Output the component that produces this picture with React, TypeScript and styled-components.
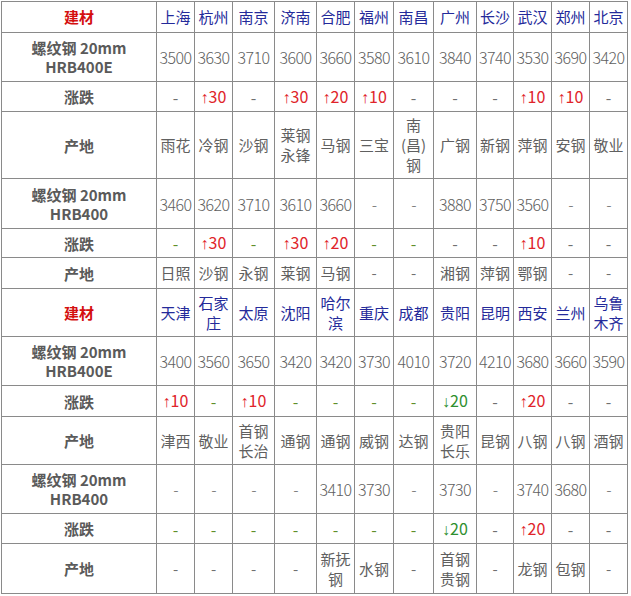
import React from "react";
import styled, { createGlobalStyle } from "styled-components";

type Tone = "plain" | "up" | "down" | "dash" | "greenDash";

interface Block {
  cities: string[];
  heights: number[];
  rows: { label: string[]; kind: "price" | "change" | "origin"; cells: string[]; green?: number[] }[];
}

const colWidths = [155, 38, 38, 42, 42, 38, 39, 40, 43, 37, 38, 38, 38];

const blocks: Block[] = [
  {
    cities: ["上海", "杭州", "南京", "济南", "合肥", "福州", "南昌", "广州", "长沙", "武汉", "郑州", "北京"],
    heights: [31, 49, 30, 67, 50, 29, 31],
    rows: [
      {
        label: ["螺纹钢 20mm", "HRB400E"],
        kind: "price",
        cells: ["3500", "3630", "3710", "3600", "3660", "3580", "3610", "3840", "3740", "3530", "3690", "3420"],
      },
      {
        label: ["涨跌"],
        kind: "change",
        cells: ["-", "↑30", "-", "↑30", "↑20", "↑10", "-", "-", "-", "↑10", "↑10", "-"],
      },
      {
        label: ["产地"],
        kind: "origin",
        cells: ["雨花", "冷钢", "沙钢", "莱钢永锋", "马钢", "三宝", "南(昌)钢", "广钢", "新钢", "萍钢", "安钢", "敬业"],
      },
      {
        label: ["螺纹钢 20mm", "HRB400"],
        kind: "price",
        cells: ["3460", "3620", "3710", "3610", "3660", "-", "-", "3880", "3750", "3560", "-", "-"],
      },
      {
        label: ["涨跌"],
        kind: "change",
        cells: ["-", "↑30", "-", "↑30", "↑20", "-", "-", "-", "-", "↑10", "-", "-"],
        green: [0, 2, 5, 6],
      },
      {
        label: ["产地"],
        kind: "origin",
        cells: ["日照", "沙钢", "永钢", "莱钢", "马钢", "-", "-", "湘钢", "萍钢", "鄂钢", "-", "-"],
      },
    ],
  },
  {
    cities: ["天津", "石家庄", "太原", "沈阳", "哈尔滨", "重庆", "成都", "贵阳", "昆明", "西安", "兰州", "乌鲁木齐"],
    heights: [48, 49, 31, 48, 49, 30, 50],
    rows: [
      {
        label: ["螺纹钢 20mm", "HRB400E"],
        kind: "price",
        cells: ["3400", "3560", "3650", "3420", "3420", "3730", "4010", "3720", "4210", "3680", "3660", "3590"],
      },
      {
        label: ["涨跌"],
        kind: "change",
        cells: ["↑10", "-", "↑10", "-", "-", "-", "-", "↓20", "-", "↑20", "-", "-"],
        green: [1, 3, 4, 5, 6],
      },
      {
        label: ["产地"],
        kind: "origin",
        cells: ["津西", "敬业", "首钢长治", "通钢", "通钢", "威钢", "达钢", "贵阳长乐", "昆钢", "八钢", "八钢", "酒钢"],
      },
      {
        label: ["螺纹钢 20mm", "HRB400"],
        kind: "price",
        cells: ["-", "-", "-", "-", "3410", "3730", "-", "3730", "-", "3740", "3680", "-"],
      },
      {
        label: ["涨跌"],
        kind: "change",
        cells: ["-", "-", "-", "-", "-", "-", "-", "↓20", "-", "↑20", "-", "-"],
        green: [0, 1, 2, 3, 4, 5, 6],
      },
      {
        label: ["产地"],
        kind: "origin",
        cells: ["-", "-", "-", "-", "新抚钢", "水钢", "-", "首钢贵钢", "-", "龙钢", "包钢", "-"],
      },
    ],
  },
];

const toneOf = (text: string, green: boolean): Tone => {
  if (text.startsWith("↑")) return "up";
  if (text.startsWith("↓")) return "down";
  if (text === "-") return green ? "greenDash" : "dash";
  return "plain";
};

const CellText = ({ text }: { text: string }) => {
  // arrows need a narrow glyph, the CJK font draws them full width
  if (text.startsWith("↑") || text.startsWith("↓")) {
    return (
      <>
        <Arrow>{text[0]}</Arrow>
        {text.slice(1)}
      </>
    );
  }
  return <>{text}</>;
};

const App = () => {
  return (
    <>
      <GlobalStyle />
      <StyledPage>
        <StyledTable>
          <colgroup>
            {colWidths.map((w, i) => (
              <col key={i} style={{ width: w }} />
            ))}
          </colgroup>
          <tbody>
            {blocks.map((block, bi) => (
              <React.Fragment key={bi}>
                <StyledRow h={block.heights[0]}>
                  <StyledHeadLabel>建材</StyledHeadLabel>
                  {block.cities.map((c) => (
                    <StyledCity key={c}>{c}</StyledCity>
                  ))}
                </StyledRow>
                {block.rows.map((row, ri) => (
                  <StyledRow key={ri} h={block.heights[ri + 1]}>
                    <StyledLabel>
                      {row.label.map((l, li) => (
                        <div key={li}>{l}</div>
                      ))}
                    </StyledLabel>
                    {row.cells.map((cell, ci) => (
                      <StyledValue
                        key={ci}
                        tone={toneOf(cell, !!row.green?.includes(ci))}
                        kind={row.kind}
                      >
                        <CellText text={cell} />
                      </StyledValue>
                    ))}
                  </StyledRow>
                ))}
              </React.Fragment>
            ))}
          </tbody>
        </StyledTable>
      </StyledPage>
    </>
  );
};

export default App;

// ========= Start Styled Elements ==========
const GlobalStyle = createGlobalStyle`
  body {
    margin: 0;
    background: #ffffff;
    font-family: "Noto Sans CJK SC", "Noto Sans", sans-serif;
  }
`;

const StyledPage = styled.div`
  padding: 1px 0 0 1px;
`;

const StyledTable = styled.table`
  border-collapse: collapse;
  table-layout: fixed;
  width: 627px;
`;

const StyledRow = styled.tr<{ h: number }>`
  height: ${(p) => p.h}px;
`;

const StyledCell = styled.td`
  border: 1px solid #8a8a8a;
  padding: 0 2px;
  text-align: center;
  vertical-align: middle;
  font-size: 15px;
  line-height: 20px;
`;

const StyledHeadLabel = styled(StyledCell)`
  color: #d40f0f;
  font-weight: bold;
`;

const StyledCity = styled(StyledCell)`
  color: #242a9a;
`;

const StyledLabel = styled(StyledCell)`
  color: #5a5a5a;
  font-weight: bold;
  line-height: 19px;
`;

const toneColors: Record<Tone, string> = {
  plain: "#606060",
  up: "#e0242a",
  down: "#2f8f2f",
  dash: "#707070",
  greenDash: "#5f8f2a",
};

const StyledValue = styled(StyledCell)<{ tone: Tone; kind: string }>`
  color: ${(p) => toneColors[p.tone]};
  font-weight: ${(p) => (p.kind === "price" ? 300 : 400)};
  font-size: ${(p) => (p.kind === "origin" ? 15 : 16)}px;
  padding: 0 ${(p) => (p.kind === "price" ? 0 : 2)}px;
  white-space: ${(p) => (p.kind === "price" ? "nowrap" : "normal")};
  letter-spacing: ${(p) => (p.kind === "price" ? "-0.6px" : "0")};
`;

const Arrow = styled.span`
  font-family: "Liberation Sans", sans-serif;
  font-weight: 400;
`;
// ========= End Styled Elements ==========
